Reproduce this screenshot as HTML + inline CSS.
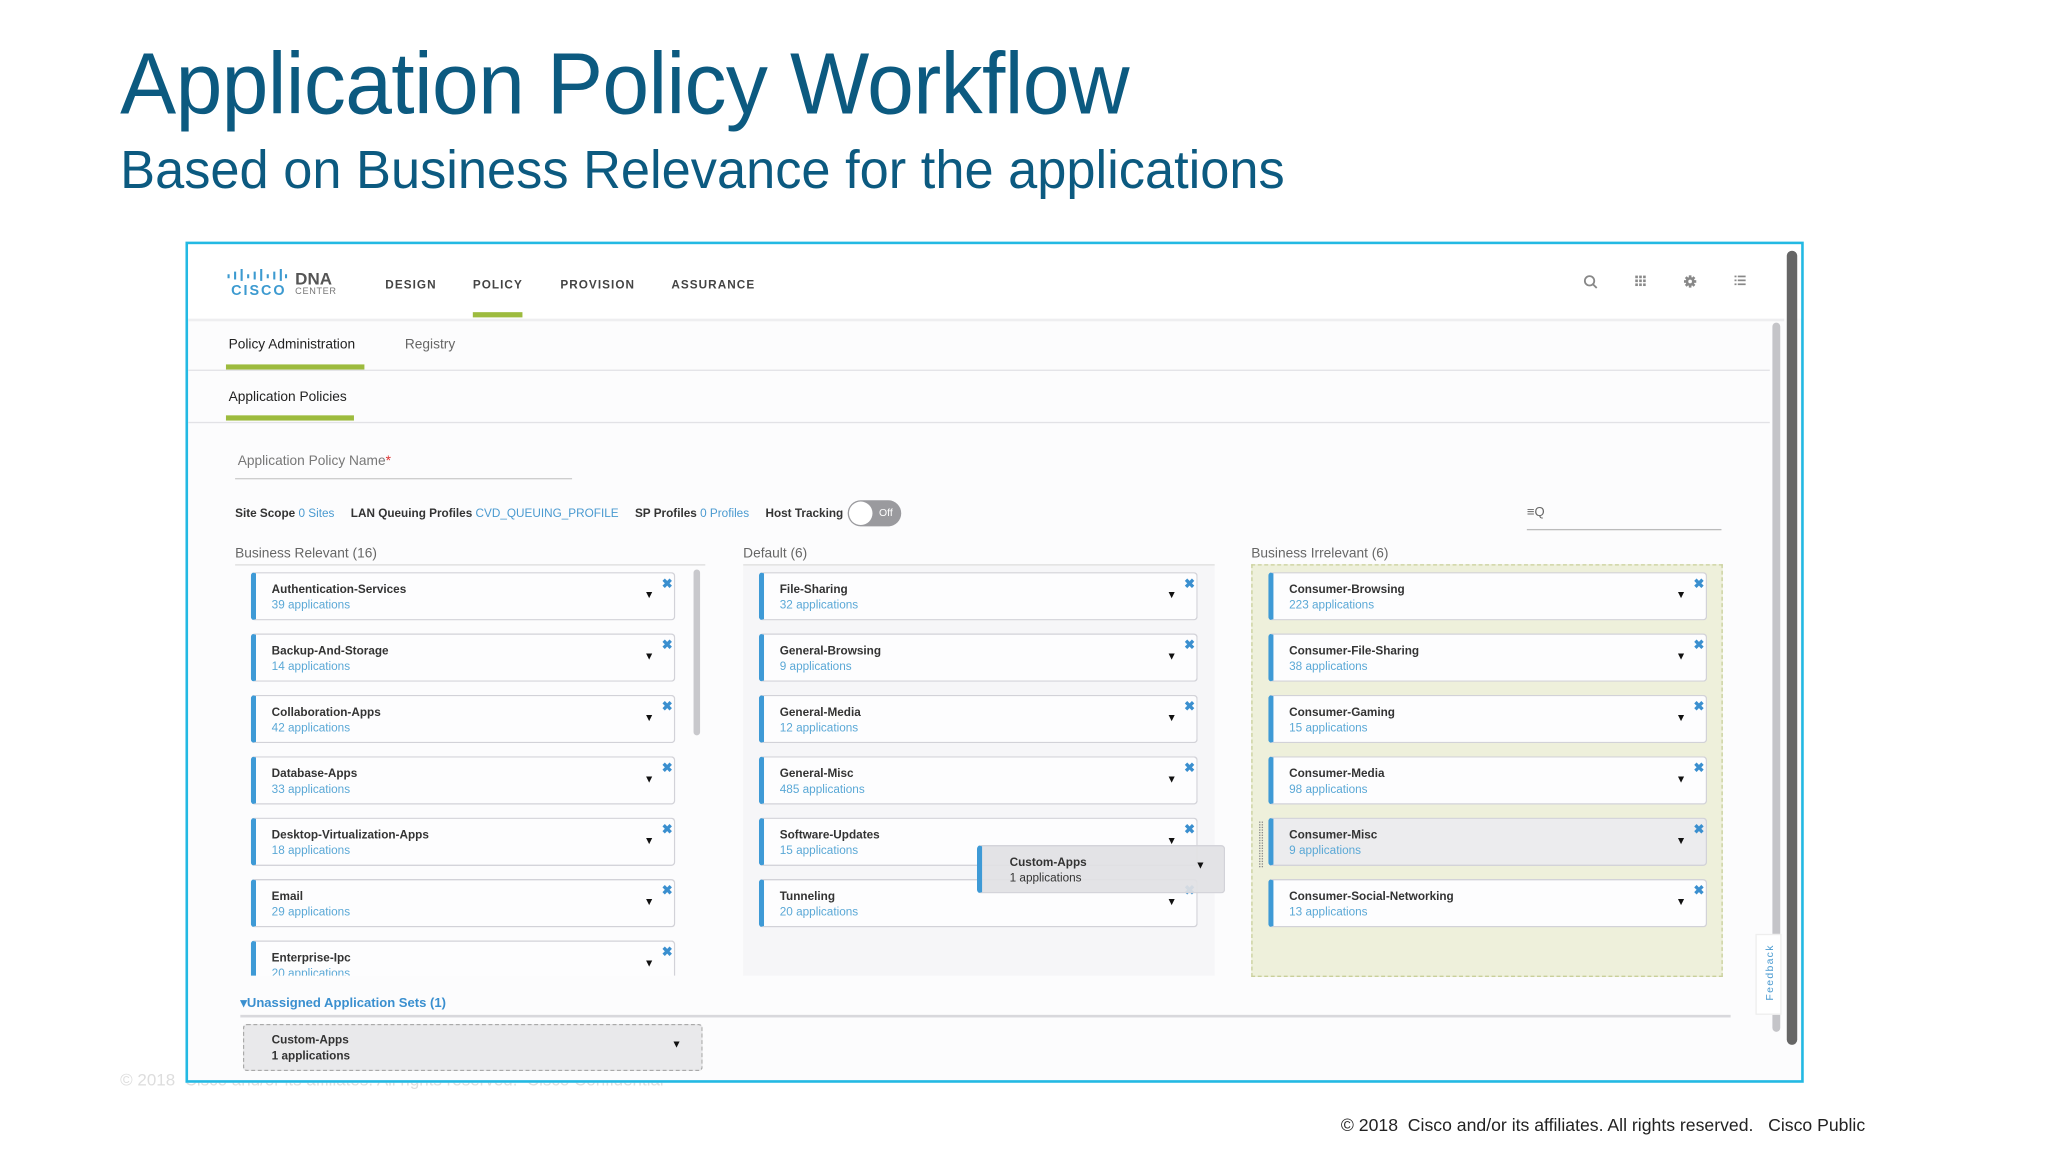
<!DOCTYPE html>
<html><head><meta charset="utf-8"><style>
*{margin:0;padding:0;box-sizing:border-box}
html,body{width:2048px;height:1152px;overflow:hidden;background:#fff;font-family:"Liberation Sans",sans-serif}
#st{position:absolute;left:0;top:0;width:1568px;height:882px;transform:scale(1.30612);transform-origin:0 0}
.a{position:absolute;white-space:nowrap}
.t1{left:92px;top:26px;font-size:67px;color:#0c5a80;transform:scaleX(0.96);transform-origin:0 0;letter-spacing:-0.5px}
.t2{left:92px;top:107px;font-size:41px;color:#0c5a80;transform:scaleX(0.978);transform-origin:0 0}
.frame{left:142px;top:185px;width:1239px;height:644px;border:2px solid #23b9e3;background:#fcfcfd;overflow:hidden}
.nav{font-size:9px;font-weight:bold;color:#444;letter-spacing:0.8px}
.tab{font-size:10.5px;color:#222}
.g{background:#9dbb3e;height:4px}
.hl{height:1px;background:#e2e2e6}
.sm{font-size:9px;color:#333}
.lk{color:#4a9ad0;font-weight:normal}
.card{position:absolute;height:37px;border:1px solid #d2d2d8;border-left:4px solid #3e9ad6;border-radius:3px;background:#fdfdfe}
.card b{position:absolute;left:12px;top:7px;font-size:9px;color:#333}
.card i{position:absolute;left:12px;top:19px;font-size:9px;color:#5aa8d6;font-style:normal}
.card .ar{position:absolute;right:15px;top:12px;font-size:8px;color:#111}
.card .x{position:absolute;right:1px;top:3px;font-size:10px;color:#3a8fcf;font-weight:bold}
.col{position:absolute;overflow:hidden}
</style></head><body><div id="st">
<div class="a t1">Application Policy Workflow</div>
<div class="a t2">Based on Business Relevance for the applications</div>
<div class="a" style="left:92px;top:819px;font-size:13px;color:#ddd">© 2018 &nbsp;Cisco and/or its affiliates. All rights reserved. &nbsp;Cisco Confidential</div>

<div class="a frame">
 <div class="a" style="left:0;top:0;width:1235px;height:57px;background:#fff"></div>
 <svg class="a" style="left:30px;top:19px" width="46" height="10" viewBox="0 0 46 10"><g stroke="#3c9ad0" stroke-width="1.6"><line x1="1" y1="4" x2="1" y2="7"/><line x1="6" y1="2" x2="6" y2="8"/><line x1="11" y1="0" x2="11" y2="9"/><line x1="16" y1="4" x2="16" y2="7"/><line x1="21" y1="2" x2="21" y2="8"/><line x1="26" y1="0" x2="26" y2="9"/><line x1="31" y1="4" x2="31" y2="7"/><line x1="36" y1="2" x2="36" y2="8"/><line x1="41" y1="0" x2="41" y2="9"/><line x1="45" y1="4" x2="45" y2="7"/></g></svg>
 <div class="a" style="left:33px;top:30px;font-size:11px;font-weight:bold;color:#3c9ad0;letter-spacing:1.5px">CISCO</div>
 <div class="a" style="left:82px;top:19px;font-size:13px;font-weight:bold;color:#555">DNA</div>
 <div class="a" style="left:82px;top:33px;font-size:7px;color:#777;letter-spacing:0.5px">CENTER</div>
 <div class="a nav" style="left:151px;top:26px">DESIGN</div>
 <div class="a nav" style="left:218px;top:26px">POLICY</div>
 <div class="a nav" style="left:285px;top:26px">PROVISION</div>
 <div class="a nav" style="left:370px;top:26px">ASSURANCE</div>
 <div class="a g" style="left:218px;top:52px;width:38px"></div>
 <svg class="a" style="left:1068px;top:23px" width="130" height="12" viewBox="0 0 130 12"><g fill="none" stroke="#888" stroke-width="1.4"><circle cx="5" cy="5" r="3.6"/><line x1="7.6" y1="7.6" x2="10.5" y2="10.5"/></g><g fill="#888"><rect x="40" y="1" width="2" height="2"/><rect x="43" y="1" width="2" height="2"/><rect x="46" y="1" width="2" height="2"/><rect x="40" y="4" width="2" height="2"/><rect x="43" y="4" width="2" height="2"/><rect x="46" y="4" width="2" height="2"/><rect x="40" y="7" width="2" height="2"/><rect x="43" y="7" width="2" height="2"/><rect x="46" y="7" width="2" height="2"/><circle cx="82" cy="5.5" r="3.4"/><rect x="81" y="0.8" width="2" height="9.4"/><rect x="77.3" y="4.5" width="9.4" height="2"/><rect x="81" y="0.8" width="2" height="9.4" transform="rotate(45 82 5.5)"/><rect x="81" y="0.8" width="2" height="9.4" transform="rotate(-45 82 5.5)"/><rect x="116" y="1" width="1.5" height="1.3"/><rect x="116" y="4" width="1.5" height="1.3"/><rect x="116" y="7" width="1.5" height="1.3"/><rect x="118.5" y="1" width="6" height="1.3"/><rect x="118.5" y="4" width="6" height="1.3"/><rect x="118.5" y="7" width="6" height="1.3"/></g><circle cx="82" cy="5.5" r="1.4" fill="#fff"/></svg>
 <div class="a hl" style="left:0;top:57px;width:1222px;height:2px;background:#eeeef0"></div>
 <div class="a" style="left:1224px;top:5px;width:8px;height:608px;border-radius:4px;background:#666"></div>
 <div class="a" style="left:1213px;top:60px;width:6px;height:543px;border-radius:3px;background:#c4c4c8"></div>
 <div class="a tab" style="left:31px;top:71px">Policy Administration</div>
 <div class="a tab" style="left:166px;top:71px;color:#666">Registry</div>
 <div class="a g" style="left:29px;top:92px;width:106px"></div>
 <div class="a hl" style="left:0;top:96px;width:1211px"></div>
 <div class="a tab" style="left:31px;top:111px">Application Policies</div>
 <div class="a g" style="left:29px;top:131px;width:98px"></div>
 <div class="a hl" style="left:0;top:136px;width:1211px"></div>
 <div class="a" style="left:38px;top:160px;font-size:10.5px;color:#777">Application Policy Name<span style="color:#d33">*</span></div>
 <div class="a" style="left:36px;top:179px;width:258px;height:1px;background:#ccc"></div>
 <div class="a sm" style="left:36px;top:201px"><b>Site Scope</b> <span class="lk">0 Sites</span> &nbsp;&nbsp;&nbsp;&nbsp;<b>LAN Queuing Profiles</b> <span class="lk">CVD_QUEUING_PROFILE</span> &nbsp;&nbsp;&nbsp;&nbsp;<b>SP Profiles</b> <span class="lk">0 Profiles</span> &nbsp;&nbsp;&nbsp;&nbsp;<b>Host Tracking</b></div>
 <div class="a" style="left:505px;top:196px;width:41px;height:20px;border-radius:10px;background:#9a9a9e"></div>
 <div class="a" style="left:506px;top:197px;width:18px;height:18px;border-radius:9px;background:#fff"></div>
 <div class="a" style="left:529px;top:201px;font-size:8px;color:#fff">Off</div>
 <div class="a" style="left:1025px;top:200px;font-size:10px;color:#666">≡Q</div>
 <div class="a" style="left:1025px;top:218px;width:149px;height:1px;background:#bbb"></div>
 <div class="a" style="left:36px;top:231px;font-size:10.5px;color:#666">Business Relevant (16)</div>
 <div class="a" style="left:425px;top:231px;font-size:10.5px;color:#666">Default (6)</div>
 <div class="a" style="left:814px;top:231px;font-size:10.5px;color:#666">Business Irrelevant (6)</div>
 <div class="a" style="left:36px;top:245px;width:360px;height:1px;background:#ddd"></div>
 <div class="a" style="left:425px;top:245px;width:361px;height:1px;background:#ddd"></div>
 <div class="col" style="left:36px;top:246px;width:360px;height:314px">
  <div class="card" style="left:12px;top:5px;width:325px"><b>Authentication-Services</b><i>39 applications</i><span class="ar">▼</span><span class="x">✖</span></div>
  <div class="card" style="left:12px;top:52px;width:325px"><b>Backup-And-Storage</b><i>14 applications</i><span class="ar">▼</span><span class="x">✖</span></div>
  <div class="card" style="left:12px;top:99px;width:325px"><b>Collaboration-Apps</b><i>42 applications</i><span class="ar">▼</span><span class="x">✖</span></div>
  <div class="card" style="left:12px;top:146px;width:325px"><b>Database-Apps</b><i>33 applications</i><span class="ar">▼</span><span class="x">✖</span></div>
  <div class="card" style="left:12px;top:193px;width:325px"><b>Desktop-Virtualization-Apps</b><i>18 applications</i><span class="ar">▼</span><span class="x">✖</span></div>
  <div class="card" style="left:12px;top:240px;width:325px"><b>Email</b><i>29 applications</i><span class="ar">▼</span><span class="x">✖</span></div>
  <div class="card" style="left:12px;top:287px;width:325px"><b>Enterprise-Ipc</b><i>20 applications</i><span class="ar">▼</span><span class="x">✖</span></div>
  <div class="a" style="left:351px;top:3px;width:5px;height:127px;border-radius:3px;background:#c8c8cc"></div>
 </div>
 <div class="col" style="left:425px;top:246px;width:361px;height:314px;background:#f6f6f8">
  <div class="card" style="left:12px;top:5px;width:336px"><b>File-Sharing</b><i>32 applications</i><span class="ar">▼</span><span class="x">✖</span></div>
  <div class="card" style="left:12px;top:52px;width:336px"><b>General-Browsing</b><i>9 applications</i><span class="ar">▼</span><span class="x">✖</span></div>
  <div class="card" style="left:12px;top:99px;width:336px"><b>General-Media</b><i>12 applications</i><span class="ar">▼</span><span class="x">✖</span></div>
  <div class="card" style="left:12px;top:146px;width:336px"><b>General-Misc</b><i>485 applications</i><span class="ar">▼</span><span class="x">✖</span></div>
  <div class="card" style="left:12px;top:193px;width:336px"><b>Software-Updates</b><i>15 applications</i><span class="ar">▼</span><span class="x">✖</span></div>
  <div class="card" style="left:12px;top:240px;width:336px"><b>Tunneling</b><i>20 applications</i><span class="ar">▼</span><span class="x">✖</span></div>
 </div>
 <div class="card" style="left:604px;top:460px;width:190px;background:rgba(225,225,228,0.92)"><b style="left:21px">Custom-Apps</b><i style="left:21px;color:#333">1 applications</i><span class="ar" style="right:14px;top:10px">▼</span></div>
 <div class="col" style="left:814px;top:245px;width:361px;height:316px;background:#eef0db;border:1px dashed #c9cf9a">
  <div class="card" style="left:12px;top:5px;width:336px"><b>Consumer-Browsing</b><i>223 applications</i><span class="ar">▼</span><span class="x">✖</span></div>
  <div class="card" style="left:12px;top:52px;width:336px"><b>Consumer-File-Sharing</b><i>38 applications</i><span class="ar">▼</span><span class="x">✖</span></div>
  <div class="card" style="left:12px;top:99px;width:336px"><b>Consumer-Gaming</b><i>15 applications</i><span class="ar">▼</span><span class="x">✖</span></div>
  <div class="card" style="left:12px;top:146px;width:336px"><b>Consumer-Media</b><i>98 applications</i><span class="ar">▼</span><span class="x">✖</span></div>
  <div class="a" style="left:5px;top:196px;width:3px;height:35px;border-left:1px dotted #888;border-right:1px dotted #888"></div>
  <div class="card" style="left:12px;top:193px;width:336px;background:#ececee"><b>Consumer-Misc</b><i>9 applications</i><span class="ar">▼</span><span class="x">✖</span></div>
  <div class="card" style="left:12px;top:240px;width:336px"><b>Consumer-Social-Networking</b><i>13 applications</i><span class="ar">▼</span><span class="x">✖</span></div>
 </div>
 <div class="a" style="left:1200px;top:528px;width:20px;height:62px;background:#fff;border:1px solid #eee"></div>
 <div class="a" style="left:1181px;top:553px;width:60px;transform:rotate(-90deg);font-size:8px;color:#4a9ad0;letter-spacing:1px;text-align:center">Feedback</div>
 <div class="a" style="left:40px;top:576px;font-size:10px;font-weight:bold;color:#3a8fcf">▾Unassigned Application Sets (1)</div>
 <div class="a" style="left:40px;top:590px;width:1141px;height:2px;background:#d8d8dc"></div>
 <div class="a" style="left:42px;top:597px;width:352px;height:36px;border:1px dashed #aaa;border-radius:3px;background:#e9e9eb"></div>
 <div class="a" style="left:64px;top:604px;font-size:9px;font-weight:bold;color:#333">Custom-Apps</div>
 <div class="a" style="left:64px;top:616px;font-size:9px;font-weight:bold;color:#333">1 applications</div>
 <div class="a" style="left:370px;top:608px;font-size:8px;color:#111">▼</div>
</div>
<div class="a" style="right:140px;top:854px;font-size:13.5px;color:#222">© 2018 &nbsp;Cisco and/or its affiliates. All rights reserved. &nbsp;&nbsp;Cisco Public</div>
</div></body></html>
